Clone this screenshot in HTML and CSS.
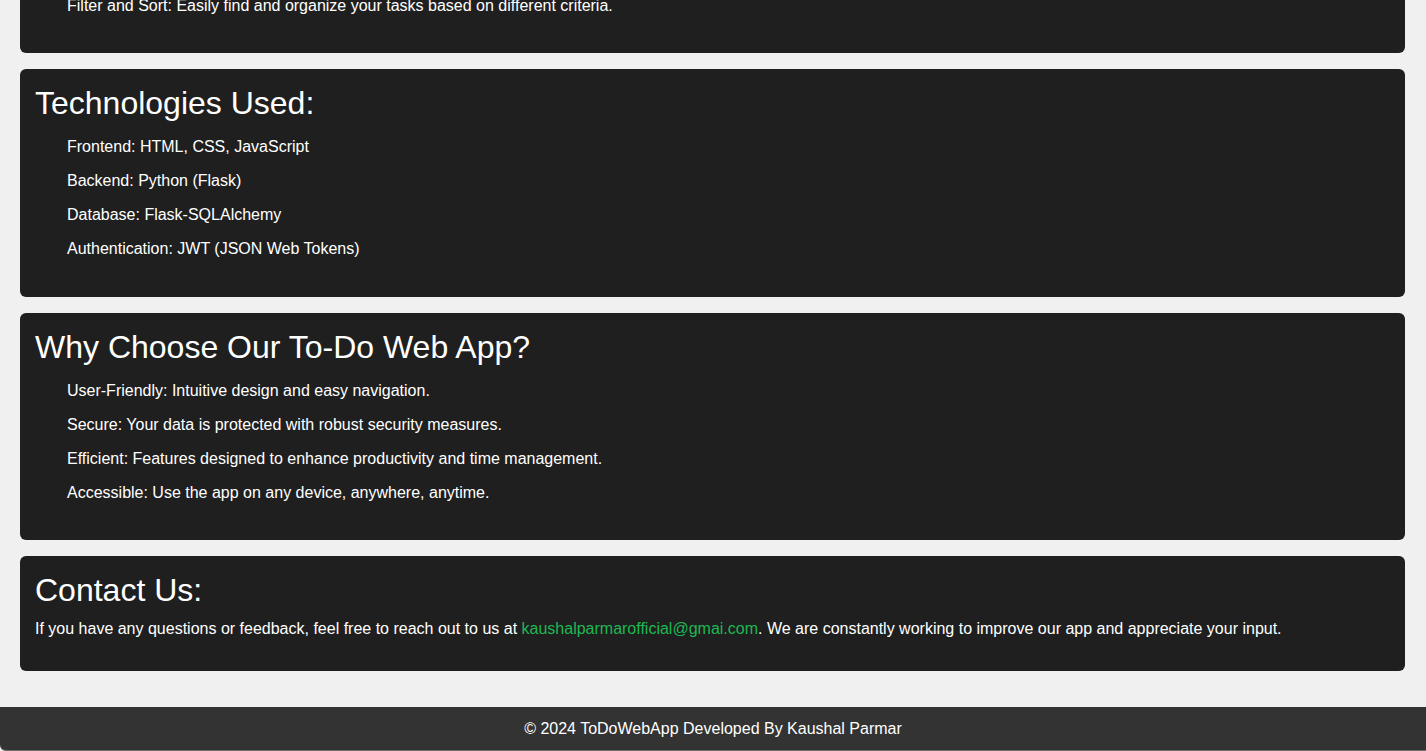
FILE: index.html
```html
<!DOCTYPE html>
<html lang="en">
<head>
<meta charset="UTF-8">
<title>About - ToDoWebApp</title>
<link rel="stylesheet" href="styles.css">
</head>
<body>
<main class="page">
  <section class="card card-features">
    <h2 class="card-title">Key Features:</h2>
    <ul class="card-list">
      <li>Task Management: Create, update, and delete tasks effortlessly.</li>
      <li>User Authentication: Secure login and registration to keep your tasks private.</li>
      <li>Due Dates: Set deadlines and never miss an important task.</li>
      <li>Filter and Sort: Easily find and organize your tasks based on different criteria.</li>
    </ul>
  </section>
  <section class="card">
    <h2 class="card-title">Technologies Used:</h2>
    <ul class="card-list">
      <li>Frontend: HTML, CSS, JavaScript</li>
      <li>Backend: Python (Flask)</li>
      <li>Database: Flask-SQLAlchemy</li>
      <li>Authentication: JWT (JSON Web Tokens)</li>
    </ul>
  </section>
  <section class="card">
    <h2 class="card-title">Why Choose Our To-Do Web App?</h2>
    <ul class="card-list">
      <li>User-Friendly: Intuitive design and easy navigation.</li>
      <li>Secure: Your data is protected with robust security measures.</li>
      <li>Efficient: Features designed to enhance productivity and time management.</li>
      <li>Accessible: Use the app on any device, anywhere, anytime.</li>
    </ul>
  </section>
  <section class="card">
    <h2 class="card-title">Contact Us:</h2>
    <p class="card-text">If you have any questions or feedback, feel free to reach out to us at <a class="mail" href="mailto:kaushalparmarofficial@gmai.com">kaushalparmarofficial@gmai.com</a>. We are constantly working to improve our app and appreciate your input.</p>
  </section>
</main>
<footer class="footer">© 2024 ToDoWebApp Developed By Kaushal Parmar</footer>
</body>
</html>
```

FILE: styles.css
```css
html, body {
  margin: 0;
  padding: 0;
}

body {
  background: #f0f0f0;
  font-family: "Liberation Sans", Arial, Helvetica, sans-serif;
  font-size: 16px;
  line-height: 18px;
  color: #ffffff;
}

.page {
  display: flex;
  flex-direction: column;
  gap: 16px;
  padding: 0 21px 36px 20px;
}

.card {
  background: #1f1f1f;
  border-radius: 6px;
  padding: 15px;
}

.card-features {
  margin-top: -174.5px;
}

.card-title {
  margin: 0;
  font-size: 32px;
  line-height: 38px;
  font-weight: normal;
}

.card-list {
  list-style: none;
  margin: 8px 0 15.5px;
  padding: 0 0 0 32px;
}

.card-list li {
  padding: 8px 0;
}

.card-text {
  margin: 11px 0 18px;
}

.mail {
  color: #1db954;
  text-decoration: none;
}

.footer {
  background: #333333;
  color: #ffffff;
  text-align: center;
  padding: 13px 0 12px;
  border-bottom: 1px solid #6e6e6e;
  border-bottom-left-radius: 6px;
}
```
